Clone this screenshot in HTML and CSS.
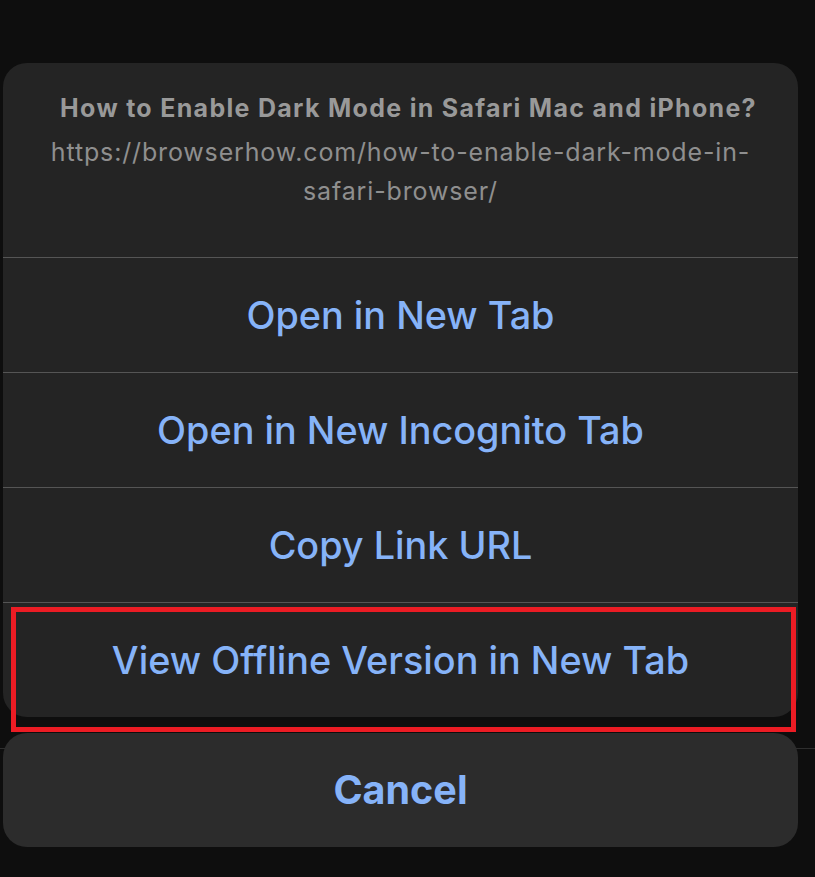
FILE: index.html
```html
<!DOCTYPE html>
<html>
<head>
<meta charset="utf-8">
<link rel="stylesheet" href="styles.css">
</head>
<body>
<div class="screen">
  <div class="sheet">
    <div class="header">
      <div class="title">How to Enable Dark Mode in Safari Mac and iPhone?</div>
      <div class="url">https://browserhow.com/how-to-enable-dark-mode-in-safari-browser/</div>
    </div>
    <div class="action">Open in New Tab</div>
    <div class="action">Open in New Incognito Tab</div>
    <div class="action">Copy Link URL</div>
    <div class="action">View Offline Version in New Tab</div>
  </div>
  <div class="cancel-wrap">
    <div class="divider-back"></div>
    <div class="cancel">Cancel</div>
  </div>
  <div class="highlight"></div>
</div>
</body>
</html>
```

FILE: styles.css
```css
html, body {
  margin: 0;
  padding: 0;
  background: #0e0e0e;
}
body {
  width: 815px;
  height: 877px;
  overflow: hidden;
  font-family: Inter, "Noto Sans", sans-serif;
}
.screen {
  position: relative;
  padding-top: 63px;
  padding-left: 3px;
}
.sheet {
  width: 795px;
  background: #242424;
  border-radius: 24px;
  overflow: hidden;
}
.header {
  height: 194px;
  box-sizing: border-box;
  padding: 30px 40px 0;
  text-align: center;
}
.title {
  color: #999999;
  font-weight: 700;
  font-size: 25px;
  line-height: 30px;
  letter-spacing: 1.3px;
  white-space: nowrap;
  padding-left: 16px;
}
.url {
  color: #8f8f8f;
  font-size: 25px;
  line-height: 39px;
  letter-spacing: 0.85px;
  margin-top: 10px;
}
.action {
  height: 115px;
  box-sizing: border-box;
  border-top: 1px solid #555555;
  display: flex;
  align-items: center;
  justify-content: center;
  color: #86b3f8;
  font-size: 37.8px;
  font-weight: 500;
}
.cancel-wrap {
  position: relative;
  margin-top: 16px;
}
.divider-back {
  position: absolute;
  left: -3px;
  right: 0;
  top: 15px;
  height: 1px;
  background: #2e2e2e;
}
.cancel {
  position: relative;
  width: 795px;
  height: 114px;
  background: #2c2c2c;
  border-radius: 24px;
  display: flex;
  align-items: center;
  justify-content: center;
  color: #86b3f8;
  font-size: 39.5px;
  font-weight: 700;
}
.highlight {
  position: absolute;
  left: 11px;
  top: 607px;
  width: 785px;
  height: 125px;
  box-sizing: border-box;
  border: 5px solid #ec1c24;
}
```
